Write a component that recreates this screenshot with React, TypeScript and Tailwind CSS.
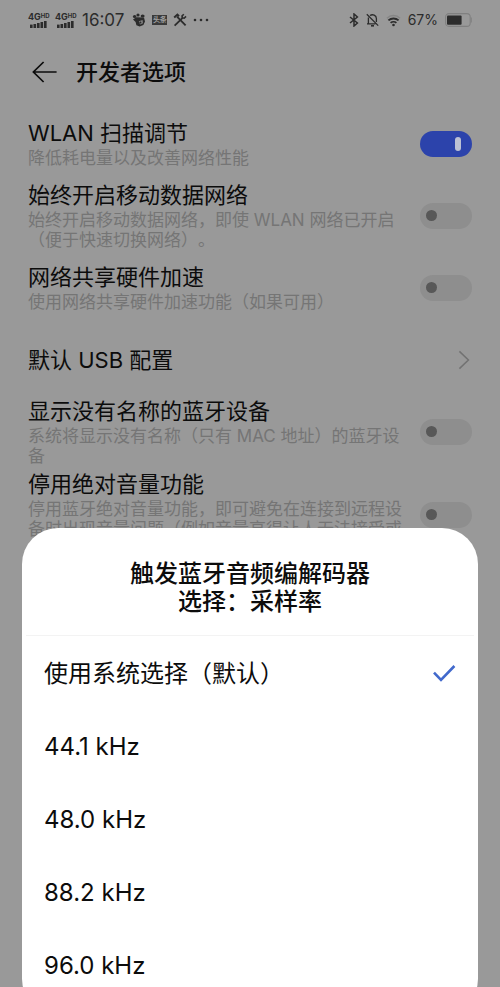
import React, { useState } from 'react';

interface Setting {
  id: string;
  title: string;
  description: string;
}

const networkSettings: Setting[] = [
  { id: 'wlan-scan', title: 'WLAN 扫描调节', description: '降低耗电量以及改善网络性能' },
  {
    id: 'mobile-data',
    title: '始终开启移动数据网络',
    description: '始终开启移动数据网络，即使 WLAN 网络已开启（便于快速切换网络）。'
  },
  { id: 'tethering', title: '网络共享硬件加速', description: '使用网络共享硬件加速功能（如果可用）' }
];

const bluetoothSettings: Setting[] = [
  {
    id: 'unnamed-devices',
    title: '显示没有名称的蓝牙设备',
    description: '系统将显示没有名称（只有 MAC 地址）的蓝牙设备'
  },
  {
    id: 'absolute-volume',
    title: '停用绝对音量功能',
    description:
      '停用蓝牙绝对音量功能，即可避免在连接到远程设备时出现音量问题（例如音量高得让人无法接受或无法控制音量）。'
  }
];

const sampleRates = ['使用系统选择（默认）', '44.1 kHz', '48.0 kHz', '88.2 kHz', '96.0 kHz'];

function CellSignal() {
  return (
    <div className="flex w-[22px] flex-col">
      <div className="flex items-start font-bold">
        <span className="text-[9px] leading-[8px]">4G</span>
        <span className="text-[6px] leading-[5px]">HD</span>
      </div>
      <svg className="ml-[2px]" width="17" height="7" viewBox="0 0 17 7" fill="currentColor">
        <rect x="0" y="3.6" width="2.6" height="3.4" />
        <rect x="3.5" y="3" width="2.6" height="4" />
        <rect x="7" y="2" width="2.6" height="5" />
        <rect x="10.5" y="1" width="2.6" height="6" />
        <rect x="14" y="0" width="2.6" height="7" />
      </svg>
    </div>
  );
}

function StatusBar() {
  return (
    <div className="flex h-10 items-center justify-between pr-7 pl-7 text-[#2c2c2c]">
      <div className="flex items-center gap-[5px]">
        <CellSignal />
        <CellSignal />
        <span className="text-[17px] leading-5">16:07</span>
        <div className="flex items-center gap-[6px] pl-[3px]">
          {/* Assistant mascot */}
          <svg width="14" height="14" viewBox="0 0 14 14">
            <g fill="currentColor">
              <ellipse cx="2.6" cy="3.6" rx="1.7" ry="1.5" />
              <ellipse cx="6" cy="2" rx="1.6" ry="1.5" />
              <ellipse cx="10.6" cy="3" rx="2" ry="1.6" />
              <path d="M1 6.4 4.2 4.2 12 4.4 13 8.6 11.4 12 7.6 13.6 4.4 12.2 3.6 9Z" />
            </g>
            <path d="M6.8 8.2 10.6 7 11 10.2 8 11.6Z" fill="#858585" />
            <circle cx="8.4" cy="9.4" r="1" fill="currentColor" />
          </svg>
          {/* News app badge */}
          <span className="flex h-[10px] w-[15px] items-center justify-center bg-[#3a3a3a] text-[7px] leading-[10px] font-bold text-[#a0a0a0]">
            头条
          </span>
          <svg width="14" height="14" viewBox="0 0 14 14" fill="none" stroke="currentColor">
            <path d="M1.2 4.6 4.4 1.6 6 3.2" strokeWidth="2" />
            <path d="M4 3.6 12.6 12.4" strokeWidth="1.8" />
            <path d="M1.6 12.6 9.6 4.8" strokeWidth="1.8" />
            <path d="M10.8 1.2 9 3 9.4 4.8 11.2 5.2 13 3.4" strokeWidth="1.6" />
          </svg>
          <svg width="16" height="4" viewBox="0 0 16 4" fill="currentColor">
            <circle cx="2" cy="2" r="1.3" />
            <circle cx="8" cy="2" r="1.3" />
            <circle cx="14" cy="2" r="1.3" />
          </svg>
        </div>
      </div>

      <div className="flex items-center gap-[7px]">
        <svg width="10" height="14" viewBox="0 0 10 14" fill="none" stroke="currentColor" strokeWidth="1.5">
          <path d="M1 4 8.4 10 5 13V1L8.4 4 1 10" />
        </svg>
        <svg width="13" height="14" viewBox="0 0 13 14" fill="none" stroke="currentColor" strokeWidth="1.3">
          <path d="M.8 1.2 12.2 12.6M4 2.6C6.6.6 10.4 2.4 10.4 5.6V9M2.4 4.4V10.8H9.4M1 10.8H2.4" />
          <path d="M5 12.8H8" strokeWidth="1.6" />
        </svg>
        <svg width="15" height="14" viewBox="0 0 15 14" fill="none" stroke="currentColor">
          <path d="M1 5.2C4.6 1.6 10.4 1.6 14 5.2" stroke="#858585" strokeWidth="1.6" />
          <path d="M2.4 7.4C5.2 4.8 9.8 4.8 12.6 7.4" strokeWidth="1.9" />
          <path d="M4.6 9.9C6.2 8.5 8.8 8.5 10.4 9.9" strokeWidth="1.8" />
          <circle cx="7.5" cy="12" r="1.3" fill="currentColor" stroke="none" />
        </svg>
        <span className="text-[14px] leading-5">67%</span>
        <svg width="27" height="14" viewBox="0 0 27 14">
          <rect x=".6" y=".6" width="24.6" height="12.8" rx="3.4" fill="none" stroke="#808080" strokeWidth="1.1" />
          <path d="M26.3 4.5V9.5" stroke="#808080" />
          <rect x="2" y="2.4" width="14.6" height="9.4" rx="1" fill="currentColor" />
        </svg>
      </div>
    </div>
  );
}

interface SettingRowProps {
  setting: Setting;
  checked: boolean;
  onToggle: (id: string) => void;
}

function SettingRow({ setting, checked, onToggle }: SettingRowProps) {
  return (
    <div className="flex items-center gap-[14px]">
      <div className="flex-1">
        <label htmlFor={setting.id} className="block text-[22px] leading-7 text-[#0c0c0c]">
          {setting.title}
        </label>
        <p className="mt-px text-[17px] leading-5 text-[#757575]">{setting.description}</p>
      </div>
      <input
        id={setting.id}
        type="checkbox"
        role="switch"
        checked={checked}
        onChange={() => onToggle(setting.id)}
        className="flex h-[26px] w-[52px] shrink-0 appearance-none items-center rounded-full bg-[#8e8e8e] px-[6px] before:h-[11px] before:w-[11px] before:rounded-full before:bg-[#585858] checked:justify-end checked:bg-[#2c43ab] checked:px-[11px] checked:before:h-[14px] checked:before:w-[6px] checked:before:rounded-[3px] checked:before:bg-[#bcc1d4]"
      />
    </div>
  );
}

export default function App() {
  const [enabled, setEnabled] = useState<string[]>(['wlan-scan']);
  const [rate, setRate] = useState(sampleRates[0]);

  const toggle = (id: string) => {
    setEnabled(prev => (prev.includes(id) ? prev.filter(item => item !== id) : [...prev, id]));
  };

  return (
    <div
      lang="zh-CN"
      className="min-h-screen overflow-hidden bg-[#999999] font-['Inter','Noto_Sans_CJK_SC',sans-serif] [text-spacing-trim:space-all]"
    >
      <StatusBar />

      <header className="flex h-16 items-center gap-[18px] pl-8 text-[#0c0c0c]">
        <button type="button" aria-label="返回">
          <svg width="26" height="22" viewBox="0 0 26 22" fill="none" stroke="currentColor" strokeWidth="1.7">
            <path d="M11.6 1 1.4 11 11.6 21M1.4 11H24.6" />
          </svg>
        </button>
        <h1 className="text-[22px] leading-7 font-medium">开发者选项</h1>
      </header>

      <main className="px-7 pt-[15px]">
        <div className="flex flex-col gap-[13px]">
          {networkSettings.map(setting => (
            <SettingRow
              key={setting.id}
              setting={setting}
              checked={enabled.includes(setting.id)}
              onToggle={toggle}
            />
          ))}
        </div>

        <button
          type="button"
          className="mt-[34px] mb-[23px] flex w-full items-center justify-between pr-[2px] text-left text-[22px] leading-7 text-[#0c0c0c]"
        >
          默认 USB 配置
          <svg width="12" height="20" viewBox="0 0 12 20" fill="none" stroke="#727272" strokeWidth="1.5">
            <path d="M1.4 1.4 10.4 10 1.4 18.6" />
          </svg>
        </button>

        <div className="flex flex-col gap-1">
          {bluetoothSettings.map(setting => (
            <SettingRow
              key={setting.id}
              setting={setting}
              checked={enabled.includes(setting.id)}
              onToggle={toggle}
            />
          ))}
        </div>
      </main>

      {/* Sample rate sheet */}
      <div
        role="dialog"
        aria-labelledby="sheet-title"
        className="fixed inset-x-[22px] -bottom-7 rounded-[36px] bg-white pt-8 pb-[13px] text-[#0c0c0c]"
      >
        <h2 id="sheet-title" className="pb-[19px] text-center text-2xl leading-7 font-medium">
          触发蓝牙音频编解码器
          <br />
          选择：采样率
        </h2>
        <div className="mx-1 border-t border-[#f3f3f3] pt-px">
          {sampleRates.map(option => (
            <label key={option} className="flex h-[73px] items-center justify-between px-[18px] text-2xl">
              {option}
              <input
                type="radio"
                name="sample-rate"
                value={option}
                checked={rate === option}
                onChange={() => setRate(option)}
                className="peer sr-only"
              />
              <svg
                className="hidden peer-checked:block"
                width="24"
                height="20"
                viewBox="0 0 24 20"
                fill="none"
                stroke="#4169cc"
                strokeWidth="2.6"
              >
                <path d="M2 8.6 9 15.8 22.4 2" />
              </svg>
            </label>
          ))}
        </div>
      </div>
    </div>
  );
}
